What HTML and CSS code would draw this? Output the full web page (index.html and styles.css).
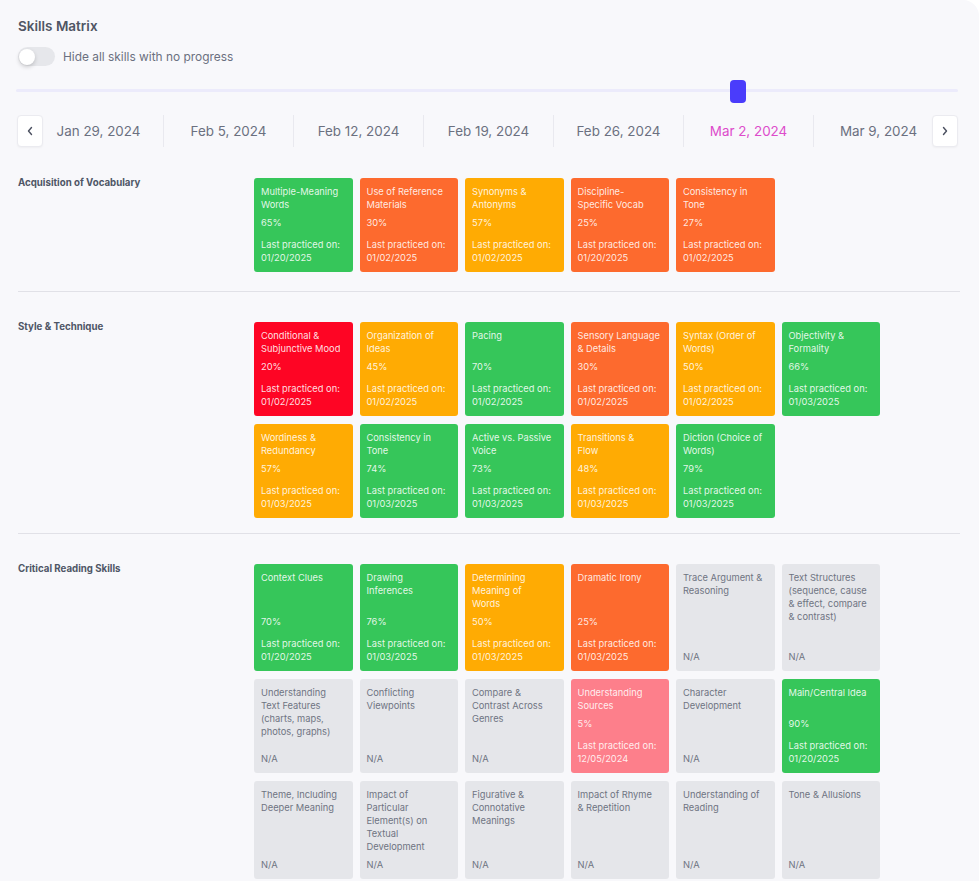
FILE: index.html
```html
<!DOCTYPE html>
<html lang="en">
<head>
<meta charset="utf-8">
<title>Skills Matrix</title>
<link rel="stylesheet" href="styles.css">
</head>
<body>
<div class="page">
  <h1 class="title">Skills Matrix</h1>
  <div class="toggle-row">
    <span class="toggle"><span class="knob"></span></span>
    <span class="toggle-label">Hide all skills with no progress</span>
  </div>

  <div class="slider">
    <div class="track"></div>
    <div class="thumb"></div>
  </div>

  <div class="dates">
    <button class="nav prev" aria-label="Previous">
      <svg width="8" height="10" viewBox="0 0 8 10"><polyline points="5.5,1.5 2.5,5 5.5,8.5" fill="none" stroke="#4b5060" stroke-width="1.4" stroke-linecap="round" stroke-linejoin="round"/></svg>
    </button>
    <div class="date-strip">
      <div class="date">Jan 29, 2024</div>
      <div class="date">Feb 5, 2024</div>
      <div class="date">Feb 12, 2024</div>
      <div class="date">Feb 19, 2024</div>
      <div class="date">Feb 26, 2024</div>
      <div class="date active">Mar 2, 2024</div>
      <div class="date">Mar 9, 2024</div>
    </div>
    <button class="nav next" aria-label="Next">
      <svg width="8" height="10" viewBox="0 0 8 10"><polyline points="2.5,1.5 5.5,5 2.5,8.5" fill="none" stroke="#4b5060" stroke-width="1.4" stroke-linecap="round" stroke-linejoin="round"/></svg>
    </button>
  </div>

  <section class="group first">
    <h2 class="group-label">Acquisition of Vocabulary</h2>
    <div class="cards">
      <div class="card green"><div class="name">Multiple-Meaning<br>Words</div><div class="meta"><div>65%</div><div class="last">Last practiced on:<br>01/20/2025</div></div></div>
      <div class="card orange"><div class="name">Use of Reference<br>Materials</div><div class="meta"><div>30%</div><div class="last">Last practiced on:<br>01/02/2025</div></div></div>
      <div class="card amber"><div class="name">Synonyms &amp;<br>Antonyms</div><div class="meta"><div>57%</div><div class="last">Last practiced on:<br>01/02/2025</div></div></div>
      <div class="card orange"><div class="name">Discipline-<br>Specific Vocab</div><div class="meta"><div>25%</div><div class="last">Last practiced on:<br>01/20/2025</div></div></div>
      <div class="card orange"><div class="name">Consistency in<br>Tone</div><div class="meta"><div>27%</div><div class="last">Last practiced on:<br>01/02/2025</div></div></div>
    </div>
  </section>
  <hr class="divider">

  <section class="group second">
    <h2 class="group-label">Style &amp; Technique</h2>
    <div class="cards">
      <div class="card red"><div class="name">Conditional &amp;<br>Subjunctive Mood</div><div class="meta"><div>20%</div><div class="last">Last practiced on:<br>01/02/2025</div></div></div>
      <div class="card amber"><div class="name">Organization of<br>Ideas</div><div class="meta"><div>45%</div><div class="last">Last practiced on:<br>01/02/2025</div></div></div>
      <div class="card green"><div class="name">Pacing</div><div class="meta"><div>70%</div><div class="last">Last practiced on:<br>01/02/2025</div></div></div>
      <div class="card orange"><div class="name">Sensory Language<br>&amp; Details</div><div class="meta"><div>30%</div><div class="last">Last practiced on:<br>01/02/2025</div></div></div>
      <div class="card amber"><div class="name">Syntax (Order of<br>Words)</div><div class="meta"><div>50%</div><div class="last">Last practiced on:<br>01/02/2025</div></div></div>
      <div class="card green"><div class="name">Objectivity &amp;<br>Formality</div><div class="meta"><div>66%</div><div class="last">Last practiced on:<br>01/03/2025</div></div></div>
      <div class="card amber"><div class="name">Wordiness &amp;<br>Redundancy</div><div class="meta"><div>57%</div><div class="last">Last practiced on:<br>01/03/2025</div></div></div>
      <div class="card green"><div class="name">Consistency in<br>Tone</div><div class="meta"><div>74%</div><div class="last">Last practiced on:<br>01/03/2025</div></div></div>
      <div class="card green"><div class="name">Active vs. Passive<br>Voice</div><div class="meta"><div>73%</div><div class="last">Last practiced on:<br>01/03/2025</div></div></div>
      <div class="card amber"><div class="name">Transitions &amp;<br>Flow</div><div class="meta"><div>48%</div><div class="last">Last practiced on:<br>01/03/2025</div></div></div>
      <div class="card green"><div class="name">Diction (Choice of<br>Words)</div><div class="meta"><div>79%</div><div class="last">Last practiced on:<br>01/03/2025</div></div></div>
    </div>
  </section>
  <hr class="divider">

  <section class="group">
    <h2 class="group-label">Critical Reading Skills</h2>
    <div class="cards">
      <div class="card green"><div class="name">Context Clues</div><div class="meta"><div>70%</div><div class="last">Last practiced on:<br>01/20/2025</div></div></div>
      <div class="card green"><div class="name">Drawing<br>Inferences</div><div class="meta"><div>76%</div><div class="last">Last practiced on:<br>01/03/2025</div></div></div>
      <div class="card amber"><div class="name">Determining<br>Meaning of<br>Words</div><div class="meta"><div>50%</div><div class="last">Last practiced on:<br>01/03/2025</div></div></div>
      <div class="card orange"><div class="name">Dramatic Irony</div><div class="meta"><div>25%</div><div class="last">Last practiced on:<br>01/03/2025</div></div></div>
      <div class="card gray"><div class="name">Trace Argument &amp;<br>Reasoning</div><div class="meta"><div>N/A</div></div></div>
      <div class="card gray"><div class="name">Text Structures<br>(sequence, cause<br>&amp; effect, compare<br>&amp; contrast)</div><div class="meta"><div>N/A</div></div></div>
      <div class="card gray"><div class="name">Understanding<br>Text Features<br>(charts, maps,<br>photos, graphs)</div><div class="meta"><div>N/A</div></div></div>
      <div class="card gray"><div class="name">Conflicting<br>Viewpoints</div><div class="meta"><div>N/A</div></div></div>
      <div class="card gray"><div class="name">Compare &amp;<br>Contrast Across<br>Genres</div><div class="meta"><div>N/A</div></div></div>
      <div class="card pink"><div class="name">Understanding<br>Sources</div><div class="meta"><div>5%</div><div class="last">Last practiced on:<br>12/05/2024</div></div></div>
      <div class="card gray"><div class="name">Character<br>Development</div><div class="meta"><div>N/A</div></div></div>
      <div class="card green"><div class="name">Main/Central Idea</div><div class="meta"><div>90%</div><div class="last">Last practiced on:<br>01/20/2025</div></div></div>
      <div class="card gray"><div class="name">Theme, Including<br>Deeper Meaning</div><div class="meta"><div>N/A</div></div></div>
      <div class="card gray"><div class="name">Impact of<br>Particular<br>Element(s) on<br>Textual<br>Development</div><div class="meta"><div>N/A</div></div></div>
      <div class="card gray"><div class="name">Figurative &amp;<br>Connotative<br>Meanings</div><div class="meta"><div>N/A</div></div></div>
      <div class="card gray"><div class="name">Impact of Rhyme<br>&amp; Repetition</div><div class="meta"><div>N/A</div></div></div>
      <div class="card gray"><div class="name">Understanding of<br>Reading</div><div class="meta"><div>N/A</div></div></div>
      <div class="card gray"><div class="name">Tone &amp; Allusions</div><div class="meta"><div>N/A</div></div></div>
    </div>
  </section>
</div>
</body>
</html>
```

FILE: styles.css
```css
* { box-sizing: border-box; }

html, body {
  margin: 0;
  padding: 0;
  background: #ffffff;
}

body {
  font-family: Inter, "Liberation Sans", sans-serif;
  color: #4b5563;
}

.page {
  background: #f8f8fb;
  border-top-right-radius: 16px;
  min-height: 881px;
  padding: 18px 0 20px 18px;
}

.title {
  margin: 0;
  font-size: 13.5px;
  line-height: 16px;
  font-weight: 600;
  color: #4f5563;
}

.toggle-row {
  display: flex;
  align-items: center;
  gap: 8px;
  margin-top: 13px;
  height: 19px;
}

.toggle {
  position: relative;
  width: 37px;
  height: 19px;
  border-radius: 10px;
  background: #e6e7eb;
}

.knob {
  position: absolute;
  left: 1px;
  top: 1.5px;
  width: 16px;
  height: 16px;
  border-radius: 50%;
  background: #ffffff;
  box-shadow: 0 2px 4px rgba(0, 0, 0, 0.18);
}

.toggle-label {
  font-size: 11.9px;
  color: #6b7080;
}

.slider {
  position: relative;
  margin: 14px 0 0 -2px;
  width: 942px;
  height: 24px;
}

.track {
  position: absolute;
  left: 0;
  right: 0;
  top: 9px;
  height: 3px;
  background: #ecebfb;
  border-radius: 2px;
}

.thumb {
  position: absolute;
  left: 714px;
  top: 0;
  width: 16px;
  height: 23px;
  border-radius: 4px;
  background: #4a3cfb;
}

.dates {
  position: relative;
  margin: 11px 0 0 -1px;
  width: 941px;
  height: 32px;
}

.date-strip {
  display: flex;
  height: 32px;
  padding-left: 16px;
  overflow: hidden;
}

.date {
  flex: 0 0 130px;
  text-align: center;
  font-size: 13.4px;
  line-height: 32px;
  color: #6b7080;
  border-left: 1px solid #e9e9ef;
}

.date:first-child { border-left-color: transparent; }

.date.active { color: #dd4ccb; }

.nav {
  position: absolute;
  top: 0;
  width: 26px;
  height: 32px;
  padding: 0;
  display: flex;
  align-items: center;
  justify-content: center;
  background: #ffffff;
  border: 1px solid #ebebf0;
  border-radius: 4px;
  box-shadow: 0 1px 2px rgba(0, 0, 0, 0.04);
}

.nav.prev { left: 0; }
.nav.next { right: 0; }

.group {
  display: grid;
  grid-template-columns: 236px auto;
  align-items: start;
  padding: 30px 0 18px 0;
}

.group.first { padding-top: 31px; padding-bottom: 19px; }
.group.second { padding-bottom: 15px; }

.group-label {
  margin: -1px 0 0 0;
  font-size: 9.7px;
  line-height: 12px;
  font-weight: 700;
  color: #4f5666;
}

.cards {
  display: grid;
  grid-template-columns: repeat(6, 98.5px);
  column-gap: 7px;
  row-gap: 8px;
}

.card {
  display: flex;
  flex-direction: column;
  padding: 7px 4px 8px 7px;
  border-radius: 3px;
  font-size: 9.3px;
  line-height: 13px;
  white-space: nowrap;
  color: rgba(255, 255, 255, 0.88);
}

.meta {
  margin-top: auto;
  padding-top: 5px;
}

.last { margin-top: 9px; }

.green { background: #36c65a; }
.orange { background: #fd6a2e; }
.amber { background: #ffab03; }
.red { background: #fe0524; }
.pink { background: #fd7f8b; }
.gray { background: #e5e6ea; color: #6f7482; }

.divider {
  margin: 0;
  border: 0;
  height: 1px;
  width: 942px;
  background: #e1e1e7;
}
```
